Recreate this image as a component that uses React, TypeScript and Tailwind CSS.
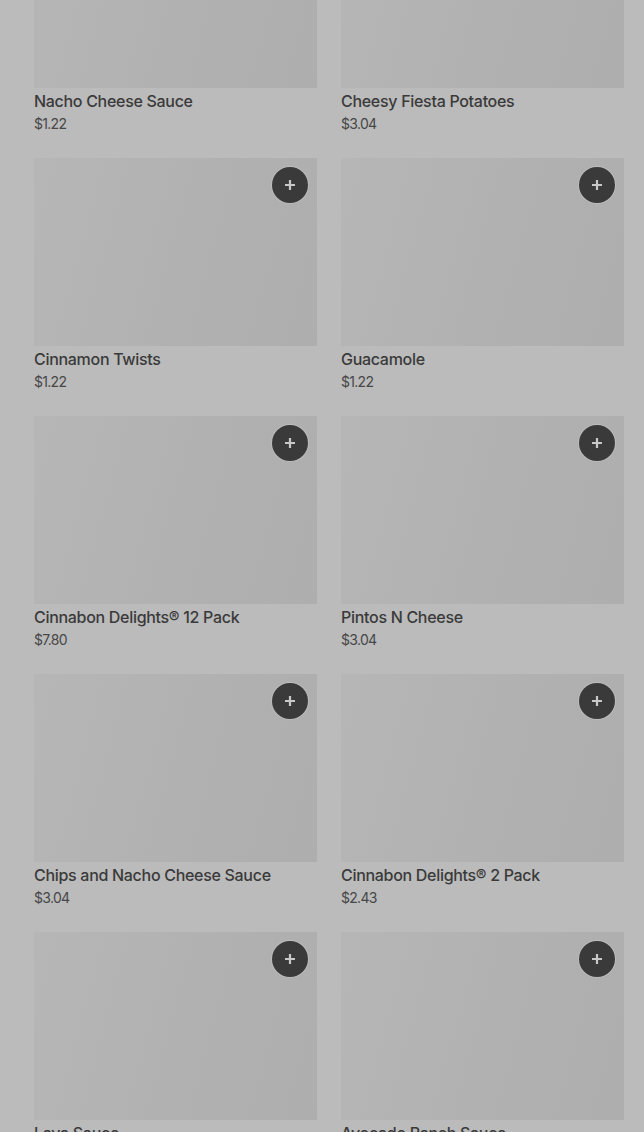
import React from "react";

const items = [
  { name: "Nacho Cheese Sauce", price: "$1.22" },
  { name: "Cheesy Fiesta Potatoes", price: "$3.04" },
  { name: "Cinnamon Twists", price: "$1.22" },
  { name: "Guacamole", price: "$1.22" },
  { name: "Cinnabon Delights® 12 Pack", price: "$7.80" },
  { name: "Pintos N Cheese", price: "$3.04" },
  { name: "Chips and Nacho Cheese Sauce", price: "$3.04" },
  { name: "Cinnabon Delights® 2 Pack", price: "$2.43" },
  { name: "Lava Sauce", price: "$0.61" },
  { name: "Avocado Ranch Sauce", price: "$0.61" },
];

function Card({ name, price }: { name: string; price: string }) {
  return (
    <div className="flex flex-col pb-[24px]">
      <div className="relative h-[188px] bg-[linear-gradient(105deg,#b6b6b6_0%,#b3b3b3_35%,#b0b0b0_65%,#aeaeae_100%)]">
        <button className="absolute top-[9px] right-[9px] flex h-[36px] w-[36px] items-center justify-center rounded-full bg-[#3a3a3a] ring-1 ring-[#c4c4c4]/60">
          <svg width="14" height="14" viewBox="0 0 14 14">
            <path d="M7 2v10M2 7h10" stroke="#c8c8c8" strokeWidth="2.2" />
          </svg>
        </button>
      </div>
      <div className="mt-[2px] text-[16px] leading-[22px] font-medium text-[#3a3a3a] tracking-[-0.3px]">
        {name}
      </div>
      <div className="mt-[2px] text-[14px] leading-[20px] text-[#474747] tracking-[-0.7px]">
        {price}
      </div>
    </div>
  );
}

export default function App() {
  return (
    <div
      className="h-[1132px] w-[644px] overflow-hidden bg-[#bbbbbb]"
      style={{ fontFamily: "Inter, 'Noto Sans', sans-serif" }}
    >
      <div className="-mt-[100px] grid grid-cols-2 gap-x-[24px] pl-[34px] pr-[20px]">
        {items.map((it) => (
          <Card key={it.name} name={it.name} price={it.price} />
        ))}
      </div>
    </div>
  );
}
